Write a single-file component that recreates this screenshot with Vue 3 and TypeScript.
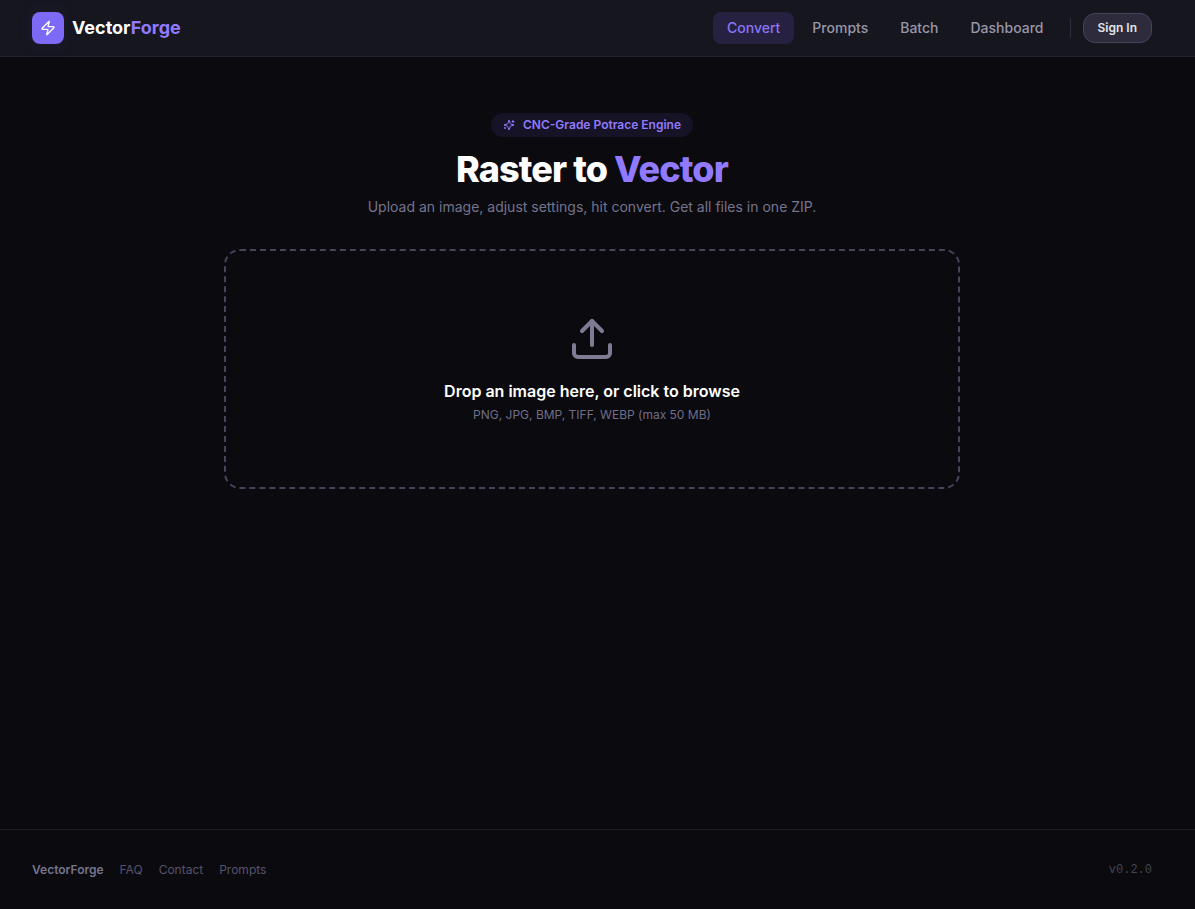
<script setup lang="ts">
import { ref } from 'vue'

interface NavLink {
  label: string
  href: string
}

const navLinks: NavLink[] = [
  { label: 'Convert', href: '#convert' },
  { label: 'Prompts', href: '#prompts' },
  { label: 'Batch', href: '#batch' },
  { label: 'Dashboard', href: '#dashboard' },
]

const footerLinks: NavLink[] = [
  { label: 'FAQ', href: '#faq' },
  { label: 'Contact', href: '#contact' },
  { label: 'Prompts', href: '#prompts' },
]

const active = ref('Convert')
const fileInput = ref<HTMLInputElement | null>(null)

function browse(): void {
  fileInput.value?.click()
}
</script>

<template>
  <div class="app">
    <header class="topbar">
      <a class="brand" href="#convert">
        <span class="brand-mark">
          <svg width="16" height="16" viewBox="0 0 24 24" fill="none" stroke="currentColor" stroke-width="2" stroke-linecap="round" stroke-linejoin="round" aria-hidden="true">
            <path d="M4 14a1 1 0 0 1-.78-1.63l9.9-10.2a.5.5 0 0 1 .86.46l-1.92 6.02A1 1 0 0 0 13 10h7a1 1 0 0 1 .78 1.63l-9.9 10.2a.5.5 0 0 1-.86-.46l1.92-6.02A1 1 0 0 0 11 14z" />
          </svg>
        </span>
        <span class="brand-name">Vector<span class="accent">Forge</span></span>
      </a>
      <nav class="nav">
        <a
          v-for="link in navLinks"
          :key="link.label"
          class="nav-link"
          :class="{ active: active === link.label }"
          :href="link.href"
          @click="active = link.label"
        >{{ link.label }}</a>
        <span class="divider"></span>
        <button class="sign-in" type="button">Sign In</button>
      </nav>
    </header>

    <main class="main">
      <div class="badge">
        <svg width="12" height="12" viewBox="0 0 24 24" fill="none" stroke="currentColor" stroke-width="2" stroke-linecap="round" stroke-linejoin="round" aria-hidden="true">
          <path d="M9.937 15.5A2 2 0 0 0 8.5 14.063l-6.135-1.582a.5.5 0 0 1 0-.962L8.5 9.936A2 2 0 0 0 9.937 8.5l1.582-6.135a.5.5 0 0 1 .963 0L14.063 8.5A2 2 0 0 0 15.5 9.937l6.135 1.581a.5.5 0 0 1 0 .964L15.5 14.063a2 2 0 0 0-1.437 1.437l-1.582 6.135a.5.5 0 0 1-.963 0z" />
          <path d="M20 3v4M22 5h-4M4 17v2M5 18H3" />
        </svg>
        <span>CNC-Grade Potrace Engine</span>
      </div>
      <h1 class="title">Raster to <span class="accent">Vector</span></h1>
      <p class="subtitle">Upload an image, adjust settings, hit convert. Get all files in one ZIP.</p>

      <button class="dropzone" type="button" @click="browse">
        <svg class="upload" width="48" height="48" viewBox="0 0 24 24" fill="none" stroke="currentColor" stroke-width="2" stroke-linecap="round" stroke-linejoin="round" aria-hidden="true">
          <path d="M12 3v12" />
          <path d="m17 8-5-5-5 5" />
          <path d="M21 15v4a2 2 0 0 1-2 2H5a2 2 0 0 1-2-2v-4" />
        </svg>
        <span class="drop-title">Drop an image here, or click to browse</span>
        <span class="drop-hint">PNG, JPG, BMP, TIFF, WEBP (max 50 MB)</span>
      </button>
      <input ref="fileInput" type="file" accept="image/*" aria-label="Image file" hidden />
    </main>

    <footer class="footer">
      <nav class="footer-links">
        <span class="footer-brand">VectorForge</span>
        <a v-for="link in footerLinks" :key="link.label" :href="link.href">{{ link.label }}</a>
      </nav>
      <span class="version">v0.2.0</span>
    </footer>
  </div>
</template>

<style>
body {
  margin: 0;
  background: #0a0a0f;
}
</style>

<style scoped>
.app {
  --gutter: 11px;
  display: flex;
  flex-direction: column;
  min-height: 100vh;
  background: #0a0a0f;
  color: #fff;
  font-family: Inter, "Liberation Sans", sans-serif;
  font-size: 14px;
  line-height: 20px;
}
.app *,
.app {
  box-sizing: border-box;
}
a {
  color: inherit;
  text-decoration: none;
}
button {
  font-family: inherit;
  cursor: pointer;
}
.accent {
  color: #917aff;
}
.topbar {
  display: flex;
  align-items: center;
  justify-content: space-between;
  height: 57px;
  padding: 0 calc(32px + var(--gutter)) 0 32px;
  background: #16161f;
  border-bottom: 1px solid #22222e;
}
.brand {
  display: flex;
  align-items: center;
  gap: 8px;
}
.brand-mark {
  display: flex;
  align-items: center;
  justify-content: center;
  width: 32px;
  height: 32px;
  border-radius: 8px;
  background: #7c6af7;
  box-shadow: 0 0 20px rgba(124, 106, 247, 0.08);
}
.brand-name {
  font-size: 18px;
  font-weight: 700;
  line-height: 28px;
}
.nav {
  display: flex;
  align-items: center;
  gap: 4px;
}
.nav-link {
  padding: 6px 14px;
  border-radius: 8px;
  color: #9896a8;
  font-weight: 500;
}
.nav-link.active {
  background: #262140;
  color: #8b76f5;
}
.divider {
  width: 1px;
  height: 20px;
  margin: 0 8px;
  background: #2e2e3e;
}
.sign-in {
  height: 30px;
  padding: 0 14px;
  border: 1px solid #46445a;
  border-radius: 12px;
  background: #2e2c3c;
  color: #e4e4ea;
  font-size: 12px;
  font-weight: 600;
  line-height: 16px;
}
.main {
  flex: 1;
  display: flex;
  flex-direction: column;
  align-items: center;
  padding: 56px calc(24px + var(--gutter)) 48px 24px;
}
.badge {
  display: flex;
  align-items: center;
  gap: 8px;
  padding: 4px 12px;
  border-radius: 12px;
  background: #151325;
  color: #917aff;
  font-size: 12px;
  font-weight: 600;
  line-height: 16px;
}
.title {
  margin: 12px 0 8px;
  font-size: 36px;
  font-weight: 800;
  line-height: 40px;
  letter-spacing: -0.025em;
}
.subtitle {
  margin: 0 0 32px;
  color: #76748c;
  text-align: center;
}
.dropzone {
  display: flex;
  flex-direction: column;
  align-items: center;
  width: 100%;
  max-width: 736px;
  padding: 64px 32px;
  border: 2px dashed #46445a;
  border-radius: 16px;
  background: transparent;
  color: #fff;
}
.upload {
  margin-bottom: 16px;
  color: #7e7c94;
}
.drop-title {
  font-size: 16px;
  font-weight: 600;
  line-height: 24px;
}
.drop-hint {
  margin-top: 4px;
  color: #706e88;
  font-size: 12px;
  line-height: 16px;
}
.footer {
  display: flex;
  align-items: center;
  justify-content: space-between;
  padding: 32px calc(32px + var(--gutter)) 31px 32px;
  border-top: 1px solid #1c1c26;
  color: #56546c;
  font-size: 12px;
  line-height: 16px;
}
.footer-links {
  display: flex;
  gap: 16px;
}
.footer-brand {
  color: #76748c;
  font-weight: 600;
}
.version {
  color: #444354;
  font-family: "Liberation Mono", monospace;
}
</style>
